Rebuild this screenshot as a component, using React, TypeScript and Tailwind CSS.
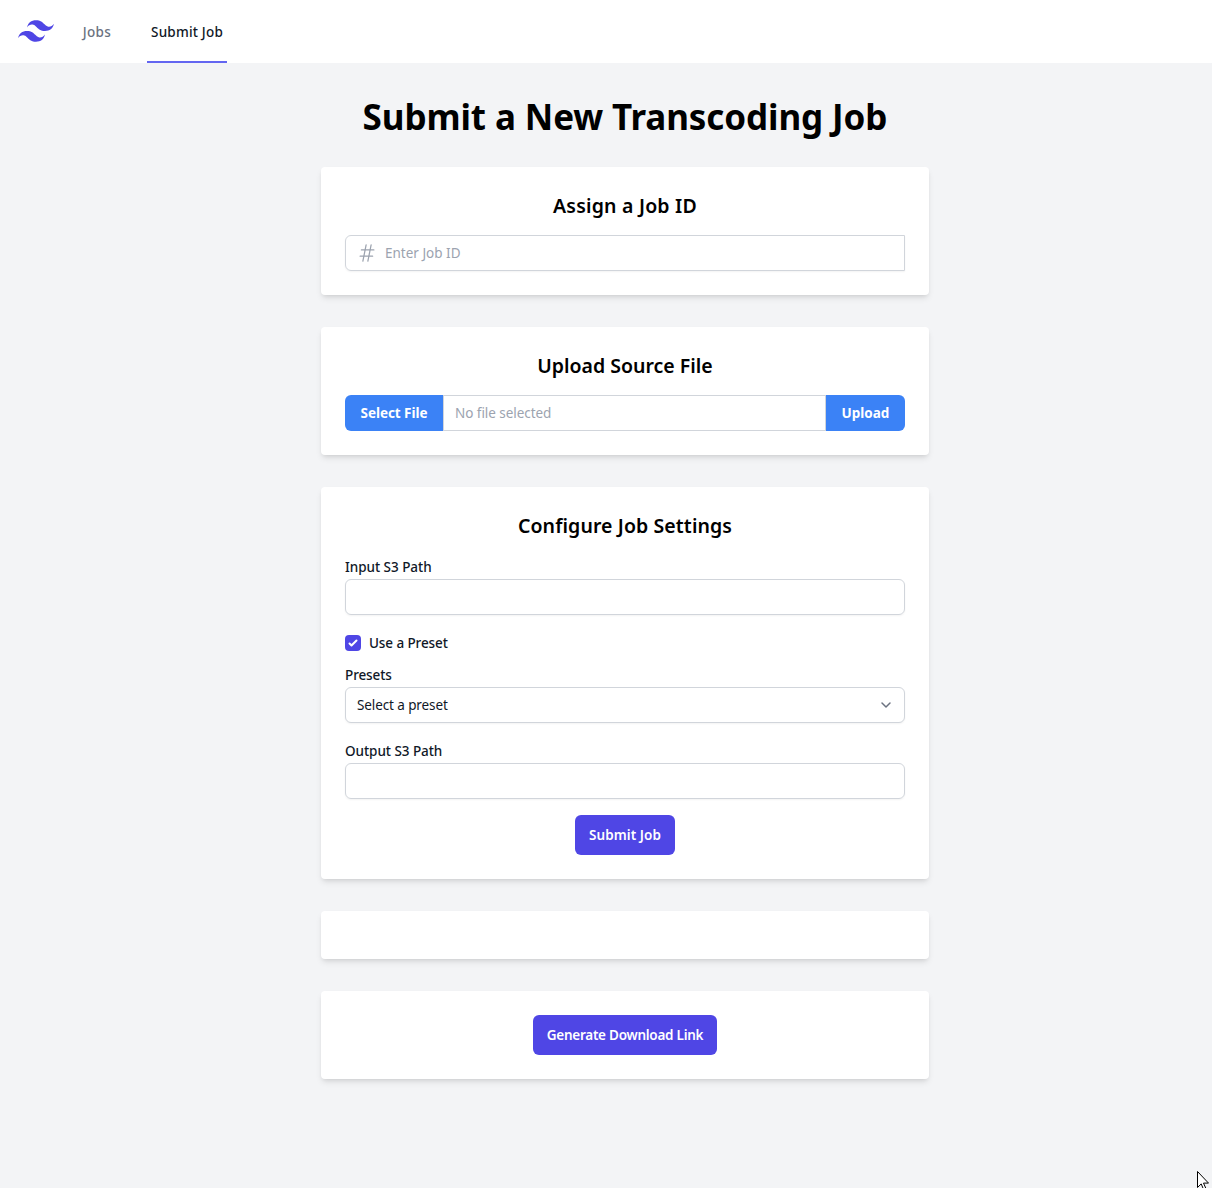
import type { ReactNode } from "react";

function Logo() {
  return (
    <svg className="h-9 w-9" viewBox="0 0 24 24" fill="#4f46e5" aria-hidden="true">
      <path d="M12.001 4.8c-3.2 0-5.2 1.6-6 4.8 1.2-1.6 2.6-2.2 4.2-1.8.913.228 1.565.89 2.288 1.624C13.666 10.618 15.027 12 18.001 12c3.2 0 5.2-1.6 6-4.8-1.2 1.6-2.6 2.2-4.2 1.8-.913-.228-1.565-.89-2.288-1.624C16.337 6.182 14.976 4.8 12.001 4.8zm-6 7.2c-3.2 0-5.2 1.6-6 4.8 1.2-1.6 2.6-2.2 4.2-1.8.913.228 1.565.89 2.288 1.624 1.177 1.194 2.538 2.576 5.512 2.576 3.2 0 5.2-1.6 6-4.8-1.2 1.6-2.6 2.2-4.2 1.8-.913-.228-1.565-.89-2.288-1.624C10.337 13.382 8.976 12 6.001 12z" />
    </svg>
  );
}

function Card({ children }: { children?: ReactNode }) {
  return (
    <section className="mb-8 rounded bg-white p-6 shadow-[0_4px_6px_-1px_rgba(0,0,0,0.1),0_2px_4px_-2px_rgba(0,0,0,0.1)]">
      {children}
    </section>
  );
}

function CardTitle({ className, children }: { className: string; children: ReactNode }) {
  return (
    <h2 className={`mb-4 h-7 pt-px text-center text-[19.5px] leading-7 font-semibold whitespace-nowrap ${className}`}>
      {children}
    </h2>
  );
}

function Label({ className, htmlFor, children }: { className: string; htmlFor: string; children: ReactNode }) {
  return (
    <label htmlFor={htmlFor} className={`block h-5 w-fit text-[13.5px] leading-5 font-medium text-gray-900 ${className}`}>
      {children}
    </label>
  );
}

function TextField({ id }: { id: string }) {
  return (
    <input
      id={id}
      type="text"
      className="mt-0.5 block h-9 w-full rounded-md border border-[#d1d5db] px-3 text-[13.5px] shadow-[0_1px_2px_0_rgba(0,0,0,0.05)] outline-none"
    />
  );
}

export default function App() {
  return (
    <div className="relative h-[1188px] overflow-hidden bg-[#f3f4f6] font-['Noto_Sans',sans-serif] text-black">
      <nav className="flex h-[63px] bg-white pl-[18px]">
        <div className="flex items-center pb-px">
          <Logo />
        </div>
        <a className="ml-6 flex w-[38px] items-center justify-center whitespace-nowrap pt-px text-[13.5px] font-medium tracking-[0.4px] text-[#6b7280]">
          Jobs
        </a>
        <a className="ml-[31px] flex w-20 items-center justify-center whitespace-nowrap border-b-2 border-[#6366f1] pt-[3px] text-[13.5px] font-medium tracking-[0.2px] text-[#111827]">
          Submit Job
        </a>
      </nav>

      <main className="pl-[38px]">
        <div className="mx-auto w-[608px]">
          <h1 className="flex h-[104px] items-center justify-center whitespace-nowrap pt-[5px] text-[35px] font-bold tracking-[-0.1px]">
            Submit a New Transcoding Job
          </h1>

          <Card>
            <CardTitle className="tracking-[0.2px]">Assign a Job ID</CardTitle>
            <div className="flex h-9 items-center rounded-l-md border border-[#d1d5db] pl-[11px] shadow-[0_1px_2px_0_rgba(0,0,0,0.05)]">
              <svg
                className="h-5 w-5 shrink-0"
                viewBox="0 0 24 24"
                fill="none"
                stroke="#9ca3af"
                strokeWidth="1.5"
                strokeLinecap="round"
                strokeLinejoin="round"
                aria-hidden="true"
              >
                <path d="M5.25 8.25h15m-16.5 7.5h15m-1.8-13.5-3.9 19.5m-2.1-19.5-3.9 19.5" />
              </svg>
              <input
                type="text"
                placeholder="Enter Job ID"
                className="ml-2 min-w-0 flex-1 bg-transparent text-[13.5px] outline-none placeholder:text-[#9ca3af]"
              />
            </div>
          </Card>

          <Card>
            <CardTitle className="tracking-normal">Upload Source File</CardTitle>
            <div className="flex h-9">
              <button className="w-[98px] rounded-l-md bg-[#3b82f6] text-[13.5px] font-bold tracking-[-0.05px] whitespace-nowrap text-white">
                Select File
              </button>
              <input
                type="text"
                readOnly
                placeholder="No file selected"
                className="min-w-0 flex-1 border border-[#d1d5db] px-[11px] text-[13.5px] tracking-[-0.05px] outline-none placeholder:text-[#9ca3af]"
              />
              <button className="w-[79px] rounded-r-md bg-[#3b82f6] text-[13.5px] font-bold text-white">Upload</button>
            </div>
          </Card>

          <Card>
            <CardTitle className="tracking-[0.1px]">Configure Job Settings</CardTitle>
            <Label htmlFor="input-path" className="mt-[18px] tracking-[-0.03px]">
              Input S3 Path
            </Label>
            <TextField id="input-path" />

            <div className="mt-[18px] flex h-5 items-center gap-2">
              <span className="flex h-4 w-4 items-center justify-center rounded bg-[#4f46e5]">
                <svg className="h-4 w-4" viewBox="0 0 16 16" fill="white" aria-hidden="true">
                  <path d="M12.207 4.793a1 1 0 0 1 0 1.414l-5 5a1 1 0 0 1-1.414 0l-2-2a1 1 0 0 1 1.414-1.414L6.5 9.086l4.293-4.293a1 1 0 0 1 1.414 0z" />
                </svg>
              </span>
              <span className="text-[13.5px] leading-5 font-medium tracking-[-0.1px] text-gray-900">Use a Preset</span>
            </div>

            <Label htmlFor="preset" className="mt-3 tracking-[-0.1px]">
              Presets
            </Label>
            <button
              id="preset"
              className="mt-0.5 flex h-9 w-full items-center justify-between rounded-md border border-[#d1d5db] bg-white pr-2 pl-[11px] text-left text-[13.5px] tracking-[-0.1px] text-gray-900 shadow-[0_1px_2px_0_rgba(0,0,0,0.05)]"
            >
              Select a preset
              <svg className="h-5 w-5" viewBox="0 0 20 20" fill="none" aria-hidden="true">
                <path d="m6 8 4 4 4-4" stroke="#6b7280" strokeWidth="1.5" strokeLinecap="round" strokeLinejoin="round" />
              </svg>
            </button>

            <Label htmlFor="output-path" className="mt-[18px] tracking-[-0.05px]">
              Output S3 Path
            </Label>
            <TextField id="output-path" />

            <button className="mx-auto mt-4 block h-10 w-[100px] rounded-md bg-[#4f46e5] text-[13.5px] font-semibold tracking-[0.1px] whitespace-nowrap text-white">
              Submit Job
            </button>
          </Card>

          <Card />

          <Card>
            <button className="mx-auto block h-10 w-[184px] rounded-md bg-[#4f46e5] text-[13.5px] font-semibold tracking-[-0.25px] whitespace-nowrap text-white">
              Generate Download Link
            </button>
          </Card>
        </div>
      </main>

      <svg className="absolute top-[1171px] left-[1197px] h-[19px] w-3" viewBox="0 0 12 19" aria-hidden="true">
        <path
          d="M.5.5v16l3.7-3.6 2.4 5.6 2.3-1-2.4-5.4h5z"
          fill="white"
          stroke="black"
          strokeWidth="1"
          strokeLinejoin="miter"
        />
      </svg>
    </div>
  );
}
